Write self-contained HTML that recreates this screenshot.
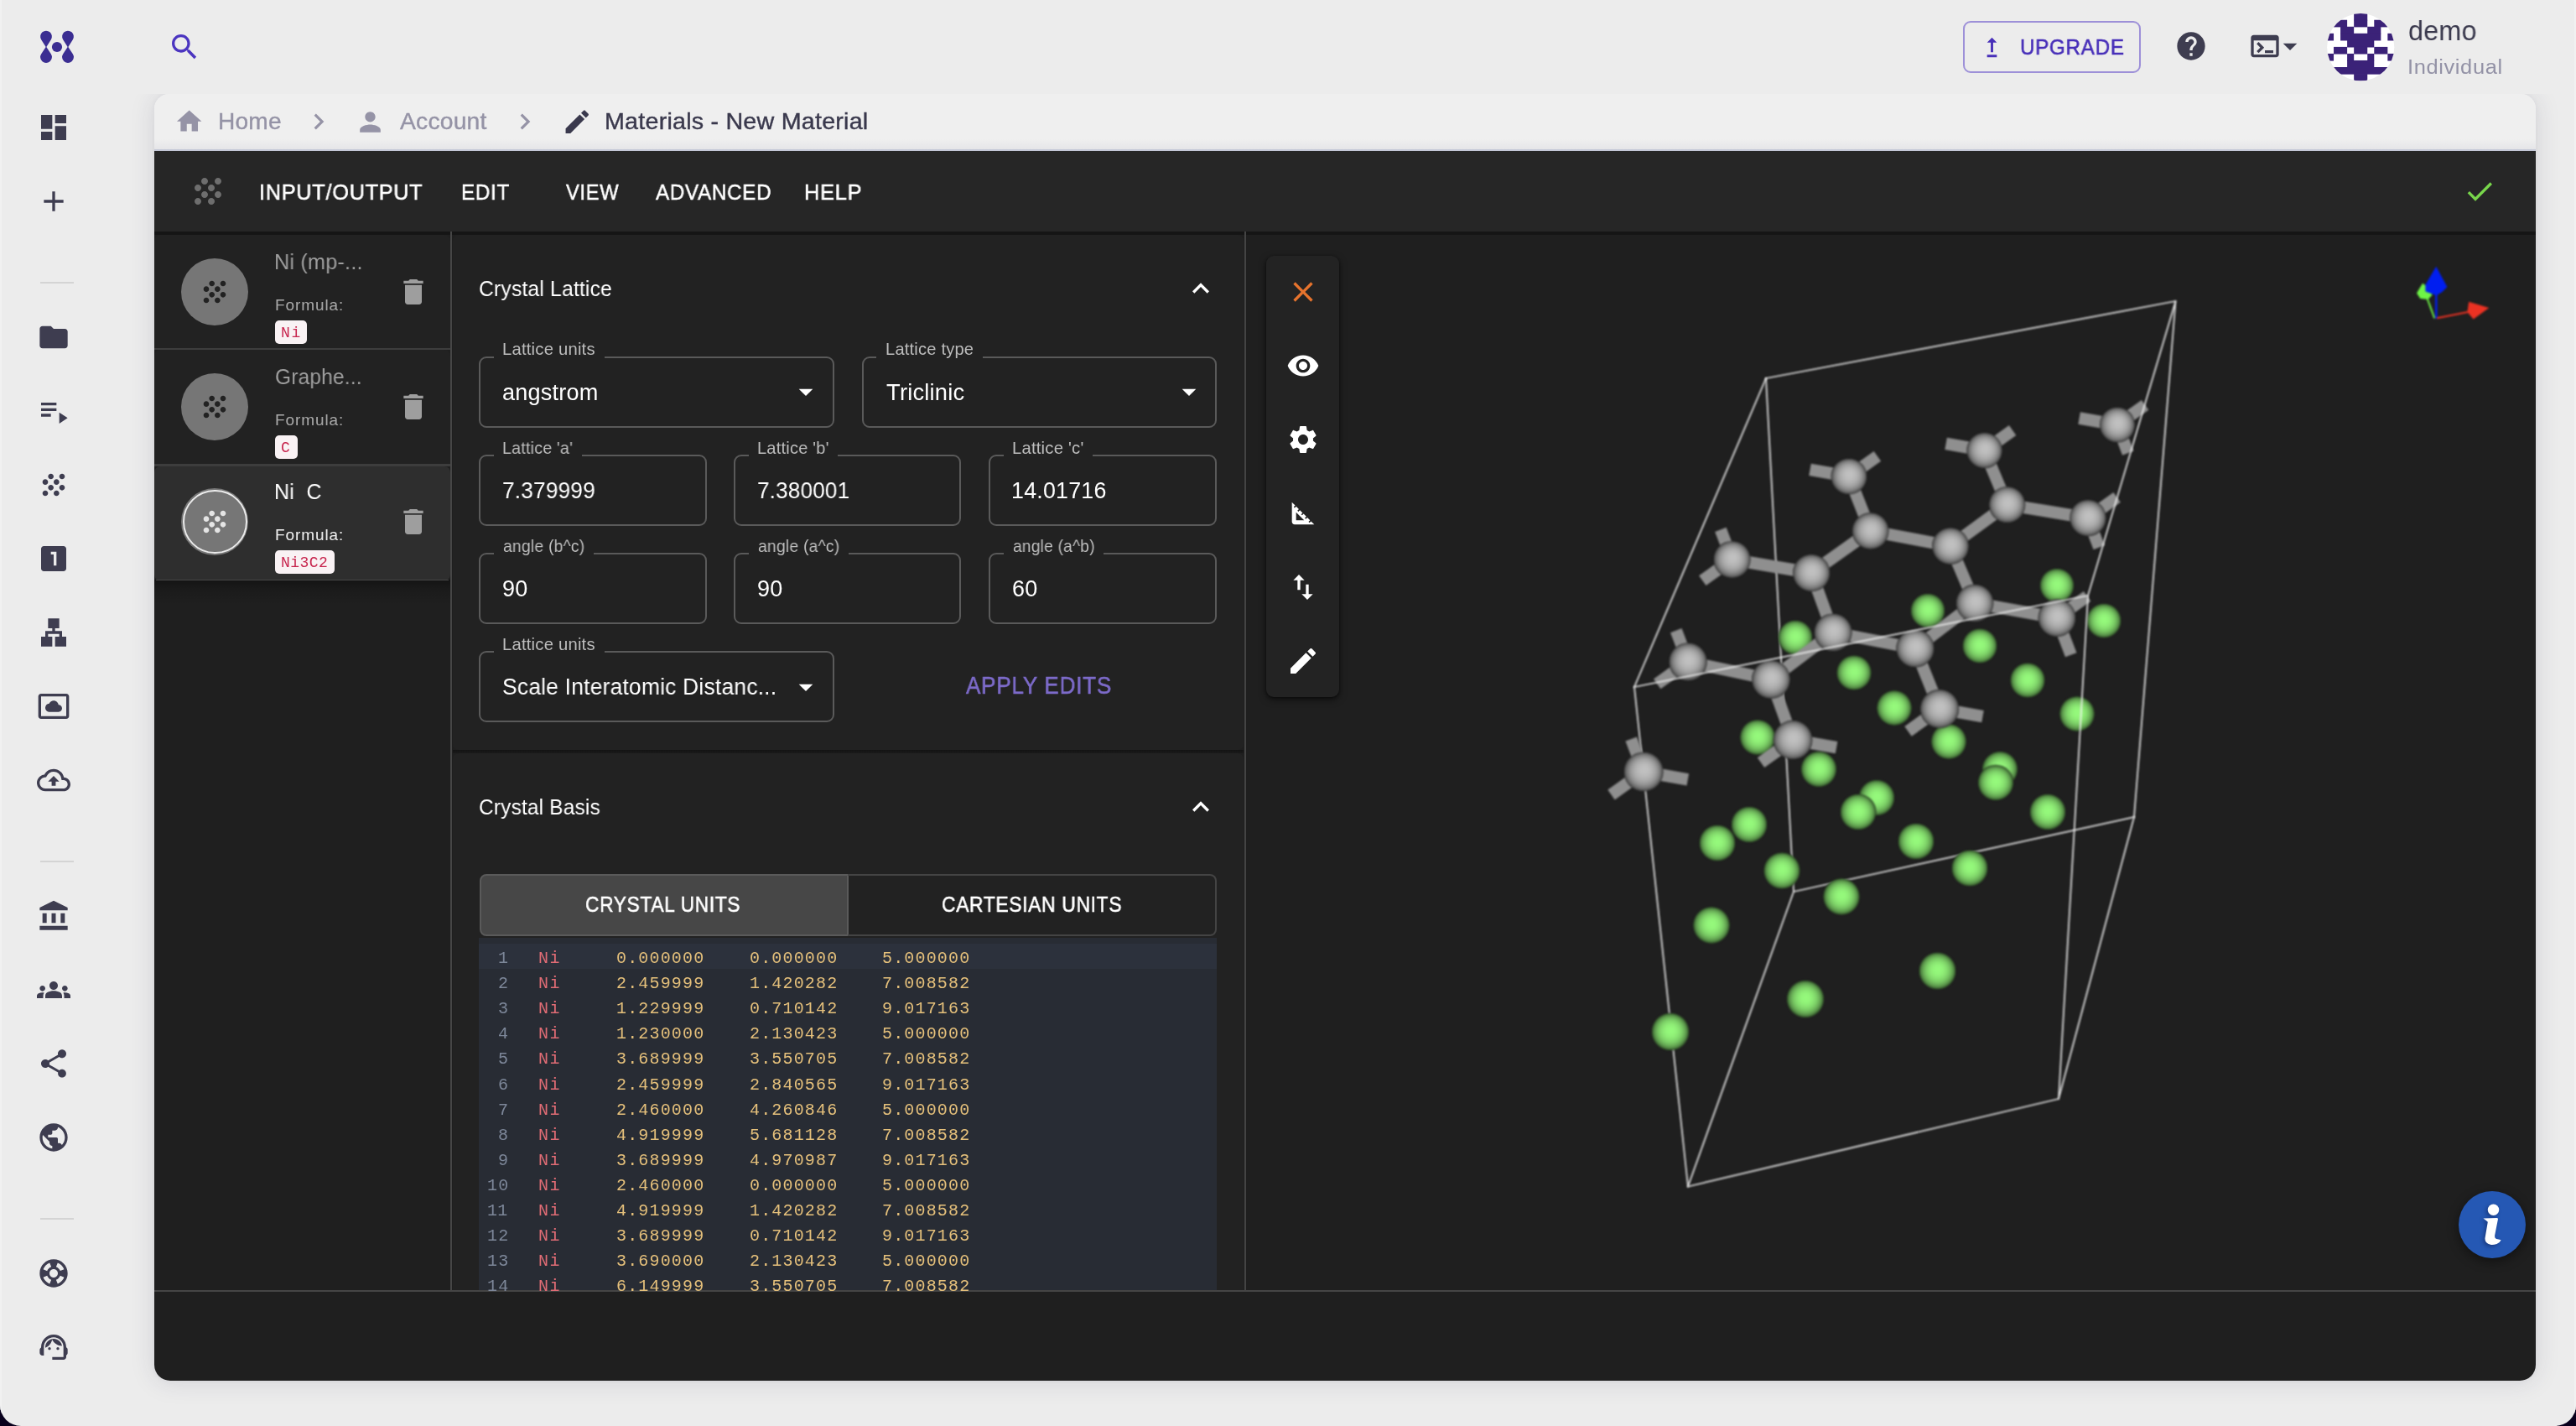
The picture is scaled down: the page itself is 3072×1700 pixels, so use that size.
<!DOCTYPE html>
<html><head><meta charset="utf-8"><title>Materials Designer</title>
<style>
html,body{margin:0;padding:0;}
body{width:3072px;height:1700px;overflow:hidden;background:#08001c;font-family:'Liberation Sans', sans-serif;}
#pg{position:absolute;left:0;top:0;width:3072px;height:1700px;background:#ececec;border-radius:0 0 25px 25px;overflow:hidden;}
.r{position:absolute;box-sizing:border-box;}
.t{position:absolute;white-space:pre;will-change:transform;}
.ic{position:absolute;display:block;}
svg{overflow:visible;}
</style></head><body><div id="pg">
<div class="r" style="left:0px;top:0px;width:2px;height:1700px;background:#f1f1f1;"></div>
<div class="r" style="left:3070px;top:0px;width:2px;height:1700px;background:#f1f1f1;"></div>
<svg class="ic" style="left:0;top:0;width:140px;height:100px" viewBox="0 0 140 100"><g fill="#3b2e92"><path d="M55.00,56.60 L49.15,47.26 A6.9,6.9 0 1,1 60.85,47.26 Z"/><path d="M55.00,55.40 L49.23,64.22 A6.9,6.9 0 1,0 60.77,64.22 Z"/><path d="M81.00,56.60 L75.15,47.26 A6.9,6.9 0 1,1 86.85,47.26 Z"/><path d="M81.00,55.40 L75.23,64.22 A6.9,6.9 0 1,0 86.77,64.22 Z"/><circle cx="68" cy="56" r="6.1"/></g></svg>
<svg class="ic" style="left:44.00px;top:132.00px;width:40px;height:40px" viewBox="0 0 24 24" ><path fill="#3e3d50" d="M3 13h8V3H3v10zm0 8h8v-6H3v6zm10 0h8V11h-8v10zm0-18v6h8V3h-8z"/></svg>
<svg class="ic" style="left:44.00px;top:220.00px;width:40px;height:40px" viewBox="0 0 24 24" ><path fill="#3e3d50" d="M19 13h-6v6h-2v-6H5v-2h6V5h2v6h6v2z"/></svg>
<svg class="ic" style="left:44.00px;top:381.50px;width:40px;height:40px" viewBox="0 0 24 24" ><path fill="#3e3d50" d="M10 4H4c-1.1 0-1.99.9-1.99 2L2 18c0 1.1.9 2 2 2h16c1.1 0 2-.9 2-2V8c0-1.1-.9-2-2-2h-8l-2-2z"/></svg>
<svg class="ic" style="left:44.00px;top:469.50px;width:40px;height:40px" viewBox="0 0 24 24" ><path fill="#3e3d50" d="M3 10h11v2H3zm0-4h11v2H3zm0 8h7v2H3zm13-1v8l6-4z"/></svg>
<svg class="ic" style="left:44.00px;top:557.50px;width:40px;height:40px" viewBox="0 0 24 24" ><path fill="#3e3d50" d="M10 12c-1.1 0-2 .9-2 2s.9 2 2 2 2-.9 2-2-.9-2-2-2zM6 8c-1.1 0-2 .9-2 2s.9 2 2 2 2-.9 2-2-.9-2-2-2zm0 8c-1.1 0-2 .9-2 2s.9 2 2 2 2-.9 2-2-.9-2-2-2zm12-8c1.1 0 2-.9 2-2s-.9-2-2-2-2 .9-2 2 .9 2 2 2zm-4 8c-1.1 0-2 .9-2 2s.9 2 2 2 2-.9 2-2-.9-2-2-2zm4-4c-1.1 0-2 .9-2 2s.9 2 2 2 2-.9 2-2-.9-2-2-2zm-4-4c-1.1 0-2 .9-2 2s.9 2 2 2 2-.9 2-2-.9-2-2-2zm-4-4c-1.1 0-2 .9-2 2s.9 2 2 2 2-.9 2-2-.9-2-2-2z"/></svg>
<svg class="ic" style="left:44.00px;top:645.50px;width:40px;height:40px" viewBox="0 0 24 24" ><path fill="#3e3d50" d="M19 3H5c-1.1 0-2 .9-2 2v14c0 1.1.9 2 2 2h14c1.1 0 2-.9 2-2V5c0-1.1-.9-2-2-2zm-5 14h-2V9h-2V7h4v10z"/></svg>
<svg class="ic" style="left:44.00px;top:733.50px;width:40px;height:40px" viewBox="0 0 24 24" ><path fill="#3e3d50" d="M13 22h8v-7h-3v-4h-5V9h3V2H8v7h3v2H6v4H3v7h8v-7H8v-2h8v2h-3z"/></svg>
<svg class="ic" style="left:44.00px;top:821.50px;width:40px;height:40px" viewBox="0 0 24 24" ><path fill="#3e3d50" d="M9 16h6.5c1.38 0 2.5-1.12 2.5-2.5S16.88 11 15.5 11h-.05c-.24-1.69-1.69-3-3.45-3-1.4 0-2.6.83-3.16 2.02h-.16C7.17 10.18 6 11.45 6 13c0 1.66 1.34 3 3 3zM21 3H3c-1.1 0-2 .9-2 2v14c0 1.1.9 2 2 2h18c1.1 0 2-.9 2-2V5c0-1.1-.9-2-2-2zm0 16.01H3V4.99h18v14.02z"/></svg>
<svg class="ic" style="left:44.00px;top:909.50px;width:40px;height:40px" viewBox="0 0 24 24" ><path fill="#3e3d50" d="M19.35 10.04C18.67 6.59 15.64 4 12 4 9.11 4 6.6 5.64 5.35 8.04 2.34 8.36 0 10.91 0 14c0 3.31 2.69 6 6 6h13c2.76 0 5-2.24 5-5 0-2.64-2.05-4.78-4.65-4.96zM19 18H6c-2.21 0-4-1.79-4-4 0-2.05 1.53-3.76 3.56-3.97l1.07-.11.5-.95C8.08 7.14 9.94 6 12 6c2.62 0 4.88 1.86 5.39 4.43l.3 1.5 1.53.11c1.56.1 2.78 1.41 2.78 2.96 0 1.65-1.35 3-3 3zM8 13h2.55v3h2.9v-3H16l-4-4z"/></svg>
<svg class="ic" style="left:44.00px;top:1071.50px;width:40px;height:40px" viewBox="0 0 24 24" ><path fill="#3e3d50" d="M4 10h3v7H4zm6.5 0h3v7h-3zM2 19h20v3H2zm15-9h3v7h-3zm-5-9L2 6v2h20V6z"/></svg>
<svg class="ic" style="left:44.00px;top:1159.50px;width:40px;height:40px" viewBox="0 0 24 24" ><path fill="#3e3d50" d="M12 12.75c1.63 0 3.07.39 4.24.9 1.08.48 1.76 1.56 1.76 2.73V18H6v-1.61c0-1.18.68-2.26 1.76-2.73 1.17-.52 2.61-.91 4.24-.91zM4 13c1.1 0 2-.9 2-2s-.9-2-2-2-2 .9-2 2 .9 2 2 2zm1.13 1.1c-.37-.06-.74-.1-1.13-.1-.99 0-1.93.21-2.78.58C.48 14.9 0 15.62 0 16.43V18h4.5v-1.61c0-.83.23-1.61.63-2.29zM20 13c1.1 0 2-.9 2-2s-.9-2-2-2-2 .9-2 2 .9 2 2 2zm4 3.43c0-.81-.48-1.53-1.22-1.85-.85-.37-1.79-.58-2.78-.58-.39 0-.76.04-1.13.1.4.68.63 1.46.63 2.29V18H24v-1.57zM12 6c1.66 0 3 1.34 3 3s-1.34 3-3 3-3-1.34-3-3 1.34-3 3-3z"/></svg>
<svg class="ic" style="left:44.00px;top:1247.50px;width:40px;height:40px" viewBox="0 0 24 24" ><path fill="#3e3d50" d="M18 16.08c-.76 0-1.44.3-1.96.77L8.91 12.7c.05-.23.09-.46.09-.7s-.04-.47-.09-.7l7.05-4.11c.54.5 1.25.81 2.04.81 1.66 0 3-1.34 3-3s-1.34-3-3-3-3 1.34-3 3c0 .24.04.47.09.7L8.04 9.81C7.5 9.31 6.79 9 6 9c-1.66 0-3 1.34-3 3s1.34 3 3 3c.79 0 1.5-.31 2.04-.81l7.12 4.16c-.05.21-.08.43-.08.65 0 1.61 1.31 2.92 2.92 2.92 1.61 0 2.92-1.31 2.92-2.92s-1.31-2.92-2.92-2.92z"/></svg>
<svg class="ic" style="left:44.00px;top:1335.50px;width:40px;height:40px" viewBox="0 0 24 24" ><path fill="#3e3d50" d="M12 2C6.48 2 2 6.48 2 12s4.48 10 10 10 10-4.48 10-10S17.52 2 12 2zm-1 17.93c-3.95-.49-7-3.85-7-7.93 0-.62.08-1.21.21-1.79L9 15v1c0 1.1.9 2 2 2v1.93zm6.9-2.54c-.26-.81-1-1.39-1.9-1.39h-1v-3c0-.55-.45-1-1-1H8v-2h2c.55 0 1-.45 1-1V7h2c1.1 0 2-.9 2-2v-.41c2.93 1.19 5 4.06 5 7.41 0 2.08-.8 3.97-2.1 5.39z"/></svg>
<svg class="ic" style="left:44.00px;top:1497.50px;width:40px;height:40px" viewBox="0 0 24 24" ><path fill="#3e3d50" d="M12 2C6.48 2 2 6.48 2 12s4.48 10 10 10 10-4.48 10-10S17.52 2 12 2zm7.46 7.12l-2.78 1.15c-.51-1.36-1.58-2.44-2.95-2.94l1.15-2.78c2.1.8 3.77 2.47 4.58 4.57zM12 15c-1.66 0-3-1.34-3-3s1.34-3 3-3 3 1.34 3 3-1.34 3-3 3zM9.13 4.54l1.17 2.78c-1.38.5-2.47 1.59-2.98 2.97L4.54 9.13c.81-2.11 2.48-3.78 4.59-4.59zM4.54 14.87l2.78-1.15c.51 1.38 1.59 2.46 2.97 2.96l-1.17 2.78c-2.1-.81-3.77-2.48-4.58-4.59zm10.34 4.59l-1.15-2.78c1.37-.51 2.45-1.59 2.95-2.97l2.78 1.17c-.81 2.1-2.48 3.77-4.58 4.58z"/></svg>
<svg class="ic" style="left:44.00px;top:1585.50px;width:40px;height:40px" viewBox="0 0 24 24" ><path fill="#3e3d50" d="M21 12.22C21 6.73 16.74 3 12 3c-4.69 0-9 3.65-9 9.28-.6.34-1 .98-1 1.72v2c0 1.1.9 2 2 2h1v-6.1c0-3.87 3.13-7 7-7s7 3.13 7 7V19h-8v2h8c1.1 0 2-.9 2-2v-1.22c.59-.31 1-.92 1-1.64v-2.3c0-.7-.41-1.31-1-1.62zM9 14c.55 0 1-.45 1-1s-.45-1-1-1-1 .45-1 1 .45 1 1 1zm6 0c.55 0 1-.45 1-1s-.45-1-1-1-1 .45-1 1 .45 1 1 1zM18 11.03C17.52 8.18 15.04 6 12.05 6c-3.03 0-6.29 2.51-6.03 6.45 2.47-1.01 4.33-3.21 4.86-5.89 1.31 2.63 4 4.44 7.12 4.47z"/></svg>
<div class="r" style="left:48px;top:335.5px;width:40px;height:2px;background:#d4d4d4;"></div>
<div class="r" style="left:48px;top:1025.5px;width:40px;height:2px;background:#d4d4d4;"></div>
<div class="r" style="left:48px;top:1451.5px;width:40px;height:2px;background:#d4d4d4;"></div>
<svg class="ic" style="left:200.00px;top:36.20px;width:40px;height:40px" viewBox="0 0 24 24" ><path fill="#4b35c0" d="M15.5 14h-.79l-.28-.27C15.41 12.59 16 11.11 16 9.5 16 5.91 13.09 3 9.5 3S3 5.91 3 9.5 5.91 16 9.5 16c1.61 0 3.09-.59 4.23-1.57l.27.28v.79l5 4.99L20.49 19l-4.99-5zm-6 0C7.01 14 5 11.99 5 9.5S7.01 5 9.5 5 14 7.01 14 9.5 11.99 14 9.5 14z"/></svg>
<div class="r" style="left:2341.4px;top:25.4px;width:211.5px;height:61.4px;background:transparent;border:2px solid #9d90d8;border-radius:9px;"></div>
<svg class="ic" style="left:2357.50px;top:38.75px;width:35px;height:35px" viewBox="0 0 24 24" ><path fill="#4830b9" d="M16 18v2H8v-2h8zM11 7.99V16h2V7.99h3L12 4 8 7.99h3z"/></svg>
<div class="t" style="left:2408.74px;top:42.80px;font:normal normal 26.0px/26.0px 'Liberation Sans', sans-serif;color:#4830b9;letter-spacing:0.740px;-webkit-text-stroke:0.55px #4830b9;transform:scaleX(0.9313086903053047);transform-origin:0 0;">UPGRADE</div>
<svg class="ic" style="left:2593.00px;top:34.90px;width:40px;height:40px" viewBox="0 0 24 24" ><path fill="#3e3d50" d="M12 2C6.48 2 2 6.48 2 12s4.48 10 10 10 10-4.48 10-10S17.52 2 12 2zm1 17h-2v-2h2v2zm2.07-7.75l-.9.92C13.45 12.9 13 13.5 13 15h-2v-.5c0-1.1.45-2.1 1.17-2.83l1.24-1.26c.37-.36.59-.86.59-1.41 0-1.1-.9-2-2-2s-2 .9-2 2H8c0-2.21 1.79-4 4-4s4 1.79 4 4c0 .88-.36 1.68-.93 2.25z"/></svg>
<svg class="ic" style="left:2681.00px;top:34.90px;width:40px;height:40px" viewBox="0 0 24 24" ><path fill="#3e3d50" d="M20 4H4c-1.11 0-2 .9-2 2v12c0 1.1.89 2 2 2h16c1.1 0 2-.9 2-2V6c0-1.1-.89-2-2-2zm0 14H4V8h16v10zm-2-1h-6v-2h6v2zM7.5 17l-1.41-1.41L8.67 13l-2.59-2.59L7.5 9l4 4-4 4z"/></svg>
<svg class="ic" style="left:2711.30px;top:34.60px;width:40px;height:40px" viewBox="0 0 24 24" ><path fill="#3e3d50" d="M7 10l5 5 5-5z"/></svg>
<svg class="ic" style="left:2774.8px;top:15.8px;width:80.4px;height:80.4px" viewBox="0 0 80.4 80.4"><defs><clipPath id="avc"><circle cx="40.2" cy="40.2" r="40.1"/></clipPath></defs><g clip-path="url(#avc)"><rect width="81" height="81" fill="#fff"/><g fill="#3b2278"><rect x="32.16" y="-0.30" width="16.08" height="8.64"/><rect x="8.04" y="7.74" width="16.08" height="8.64"/><rect x="32.16" y="7.74" width="16.08" height="8.64"/><rect x="56.28" y="7.74" width="16.08" height="8.64"/><rect x="16.08" y="15.78" width="16.08" height="8.64"/><rect x="48.24" y="15.78" width="16.08" height="8.64"/><rect x="0.00" y="23.82" width="8.04" height="8.64"/><rect x="16.08" y="23.82" width="48.24" height="8.64"/><rect x="72.36" y="23.82" width="8.04" height="8.64"/><rect x="24.12" y="31.86" width="32.16" height="8.64"/><rect x="8.04" y="39.90" width="16.08" height="8.64"/><rect x="32.16" y="39.90" width="16.08" height="8.64"/><rect x="56.28" y="39.90" width="16.08" height="8.64"/><rect x="0.00" y="47.94" width="8.04" height="8.64"/><rect x="24.12" y="47.94" width="8.04" height="8.64"/><rect x="48.24" y="47.94" width="8.04" height="8.64"/><rect x="72.36" y="47.94" width="8.04" height="8.64"/><rect x="24.12" y="55.98" width="32.16" height="8.64"/><rect x="8.04" y="64.02" width="64.32" height="8.64"/><rect x="32.16" y="72.06" width="16.08" height="8.64"/></g></g></svg>
<div class="t" style="left:2871.72px;top:20.62px;font:normal normal 32.96px/32.96px 'Liberation Sans', sans-serif;color:#3a394d;letter-spacing:0.200px;transform:scaleX(0.9813622794031704);transform-origin:0 0;">demo</div>
<div class="t" style="left:2870.64px;top:67.74px;font:normal normal 24.72px/24.72px 'Liberation Sans', sans-serif;color:#9392a6;letter-spacing:0.600px;transform:scaleX(1.0296441779225745);transform-origin:0 0;">Individual</div>
<div class="r" style="left:100px;top:112px;width:2972px;height:1588px;overflow:hidden"><div class="r" style="left:84px;top:0;width:2839.8px;height:1534px;background:linear-gradient(to bottom,#efefef 0,#efefef 60px,#1f1f1f 60px);border-radius:18px 18px 19px 19px;box-shadow:0 1px 30px rgba(40,40,80,.13),0 0 6px rgba(40,40,80,.04);"></div></div>
<div class="r" style="left:184px;top:112px;width:2839.8px;height:68px;background:#efefef;border-radius:18px 18px 0 0;"></div>
<div class="r" style="left:184px;top:166px;width:2839.8px;height:12px;background:linear-gradient(to bottom,rgba(230,230,233,0) 0%,rgba(229,229,232,1) 100%);"></div>
<div class="r" style="left:184px;top:178px;width:2839.8px;height:2px;background:#c3c7d6;"></div>
<svg class="ic" style="left:208.20px;top:127.30px;width:35.4px;height:35.4px" viewBox="0 0 24 24" ><path fill="#9593a6" d="M10 20v-6h4v6h5v-8h3L12 3 2 12h3v8z"/></svg>
<div class="t" style="left:259.79px;top:131.20px;font:normal normal 28.0px/28.0px 'Liberation Sans', sans-serif;color:#9593a6;letter-spacing:0.200px;-webkit-text-stroke:0.4px #9593a6;transform:scaleX(1.0038892111992093);transform-origin:0 0;">Home</div>
<svg class="ic" style="left:360.92px;top:126.00px;width:38px;height:38px" viewBox="0 0 24 24" ><path fill="#9593a6" d="M10 6L8.59 7.41 13.17 12l-4.58 4.59L10 18l6-6z"/></svg>
<svg class="ic" style="left:423.40px;top:126.50px;width:37px;height:37px" viewBox="0 0 24 24" ><path fill="#9593a6" d="M12 12c2.21 0 4-1.79 4-4s-1.79-4-4-4-4 1.79-4 4 1.79 4 4 4zm0 2c-2.67 0-8 1.34-8 4v2h16v-2c0-2.66-5.33-4-8-4z"/></svg>
<div class="t" style="left:476.60px;top:131.20px;font:normal normal 28.0px/28.0px 'Liberation Sans', sans-serif;color:#9593a6;letter-spacing:0.200px;-webkit-text-stroke:0.4px #9593a6;transform:scaleX(1.0098196369894568);transform-origin:0 0;">Account</div>
<svg class="ic" style="left:607.02px;top:126.00px;width:38px;height:38px" viewBox="0 0 24 24" ><path fill="#9593a6" d="M10 6L8.59 7.41 13.17 12l-4.58 4.59L10 18l6-6z"/></svg>
<svg class="ic" style="left:669.50px;top:126.80px;width:36.5px;height:36.5px" viewBox="0 0 24 24" ><path fill="#3a394d" d="M3 17.25V21h3.75L17.81 9.94l-3.75-3.75L3 17.25zM20.71 7.04c.39-.39.39-1.02 0-1.41l-2.34-2.34c-.39-.39-1.02-.39-1.41 0l-1.83 1.83 3.75 3.75 1.83-1.83z"/></svg>
<div class="t" style="left:720.75px;top:131.20px;font:normal normal 28.0px/28.0px 'Liberation Sans', sans-serif;color:#3a394d;letter-spacing:0.200px;-webkit-text-stroke:0.4px #3a394d;transform:scaleX(1.0253046333642934);transform-origin:0 0;">Materials - New Material</div>
<div class="r" style="left:184px;top:180px;width:2839.8px;height:96px;background:#262626;"></div>
<div class="r" style="left:184px;top:276px;width:2839.8px;height:4px;background:#151515;"></div>
<svg class="ic" style="left:224.20px;top:203.90px;width:48px;height:48px" viewBox="0 0 24 24" ><path fill="#6e6e6e" d="M10 12c-1.1 0-2 .9-2 2s.9 2 2 2 2-.9 2-2-.9-2-2-2zM6 8c-1.1 0-2 .9-2 2s.9 2 2 2 2-.9 2-2-.9-2-2-2zm0 8c-1.1 0-2 .9-2 2s.9 2 2 2 2-.9 2-2-.9-2-2-2zm12-8c1.1 0 2-.9 2-2s-.9-2-2-2-2 .9-2 2 .9 2 2 2zm-4 8c-1.1 0-2 .9-2 2s.9 2 2 2 2-.9 2-2-.9-2-2-2zm4-4c-1.1 0-2 .9-2 2s.9 2 2 2 2-.9 2-2-.9-2-2-2zm-4-4c-1.1 0-2 .9-2 2s.9 2 2 2 2-.9 2-2-.9-2-2-2zm-4-4c-1.1 0-2 .9-2 2s.9 2 2 2 2-.9 2-2-.9-2-2-2z"/></svg>
<div class="t" style="left:309.16px;top:215.90px;font:normal normal 26.0px/26.0px 'Liberation Sans', sans-serif;color:#fff;letter-spacing:0.740px;-webkit-text-stroke:0.5px #fff;transform:scaleX(0.9724564793705689);transform-origin:0 0;">INPUT/OUTPUT</div>
<div class="t" style="left:549.63px;top:215.90px;font:normal normal 26.0px/26.0px 'Liberation Sans', sans-serif;color:#fff;letter-spacing:0.740px;-webkit-text-stroke:0.5px #fff;transform:scaleX(0.9334842620125369);transform-origin:0 0;">EDIT</div>
<div class="t" style="left:675.20px;top:215.90px;font:normal normal 26.0px/26.0px 'Liberation Sans', sans-serif;color:#fff;letter-spacing:0.740px;-webkit-text-stroke:0.5px #fff;transform:scaleX(0.9099164414346961);transform-origin:0 0;">VIEW</div>
<div class="t" style="left:781.80px;top:215.90px;font:normal normal 26.0px/26.0px 'Liberation Sans', sans-serif;color:#fff;letter-spacing:0.740px;-webkit-text-stroke:0.5px #fff;transform:scaleX(0.9316309363015317);transform-origin:0 0;">ADVANCED</div>
<div class="t" style="left:959.04px;top:215.90px;font:normal normal 26.0px/26.0px 'Liberation Sans', sans-serif;color:#fff;letter-spacing:0.740px;-webkit-text-stroke:0.5px #fff;transform:scaleX(0.9775723495232838);transform-origin:0 0;">HELP</div>
<svg class="ic" style="left:2936.50px;top:208.10px;width:40px;height:40px" viewBox="0 0 24 24" ><path fill="#78d64b" d="M9 16.17L4.83 12l-1.42 1.41L9 19 21 7l-1.41-1.41z"/></svg>
<div class="r" style="left:184px;top:280px;width:352.6px;height:135px;background:#222;border-radius:7px 7px 0 0;"></div>
<div class="r" style="left:184px;top:415px;width:353px;height:2px;background:#3d3d3d;"></div>
<div class="r" style="left:184px;top:417px;width:352.6px;height:136px;background:#222;border-radius:7px 7px 0 0;"></div>
<div class="r" style="left:184px;top:553px;width:353px;height:2.5px;background:#3d3d3d;"></div>
<div class="r" style="left:184px;top:691px;width:353px;height:30px;background:linear-gradient(to bottom,rgba(0,0,0,.36),rgba(0,0,0,.12) 45%,rgba(0,0,0,0));"></div>
<div class="r" style="left:184px;top:555.5px;width:352.6px;height:136px;background:#2e2e2e;border-radius:7px;"></div>
<div class="r" style="left:186px;top:690.6px;width:349px;height:1.8px;background:#474747;"></div>
<div class="r" style="left:216.1px;top:307.79999999999995px;width:80.2px;height:80.2px;background:#767676;border-radius:50%;"></div>
<svg class="ic" style="left:236.10px;top:327.90px;width:40px;height:40px" viewBox="0 0 24 24" ><path fill="#222" d="M10 12c-1.1 0-2 .9-2 2s.9 2 2 2 2-.9 2-2-.9-2-2-2zM6 8c-1.1 0-2 .9-2 2s.9 2 2 2 2-.9 2-2-.9-2-2-2zm0 8c-1.1 0-2 .9-2 2s.9 2 2 2 2-.9 2-2-.9-2-2-2zm12-8c1.1 0 2-.9 2-2s-.9-2-2-2-2 .9-2 2 .9 2 2 2zm-4 8c-1.1 0-2 .9-2 2s.9 2 2 2 2-.9 2-2-.9-2-2-2zm4-4c-1.1 0-2 .9-2 2s.9 2 2 2 2-.9 2-2-.9-2-2-2zm-4-4c-1.1 0-2 .9-2 2s.9 2 2 2 2-.9 2-2-.9-2-2-2zm-4-4c-1.1 0-2 .9-2 2s.9 2 2 2 2-.9 2-2-.9-2-2-2z"/></svg>
<div class="t" style="left:327.14px;top:299.92px;font:normal normal 25.75px/25.75px 'Liberation Sans', sans-serif;color:#9e9e9e;letter-spacing:0.200px;transform:scaleX(0.9797106071249468);transform-origin:0 0;">Ni (mp-...</div>
<div class="t" style="left:328.10px;top:353.77px;font:normal normal 19.05px/19.05px 'Liberation Sans', sans-serif;color:#ababab;letter-spacing:0.900px;transform:scaleX(0.998776970153928);transform-origin:0 0;">Formula:</div>
<div class="r" style="left:328px;top:382.2px;width:38.1px;height:27.8px;background:#f9f2f4;border-radius:5px;"></div>
<div class="t" style="left:334.70px;top:387.80px;font:normal normal 18px/18px 'Liberation Mono', monospace;color:#c7254e;letter-spacing:1.798px;">Ni</div>
<svg class="ic" style="left:473.20px;top:327.90px;width:40px;height:40px" viewBox="0 0 24 24" ><path fill="#9e9e9e" d="M6 19c0 1.1.9 2 2 2h8c1.1 0 2-.9 2-2V7H6v12zM19 4h-3.5l-1-1h-5l-1 1H5v2h14V4z"/></svg>
<div class="r" style="left:216.1px;top:444.79999999999995px;width:80.2px;height:80.2px;background:#767676;border-radius:50%;"></div>
<svg class="ic" style="left:236.10px;top:464.90px;width:40px;height:40px" viewBox="0 0 24 24" ><path fill="#222" d="M10 12c-1.1 0-2 .9-2 2s.9 2 2 2 2-.9 2-2-.9-2-2-2zM6 8c-1.1 0-2 .9-2 2s.9 2 2 2 2-.9 2-2-.9-2-2-2zm0 8c-1.1 0-2 .9-2 2s.9 2 2 2 2-.9 2-2-.9-2-2-2zm12-8c1.1 0 2-.9 2-2s-.9-2-2-2-2 .9-2 2 .9 2 2 2zm-4 8c-1.1 0-2 .9-2 2s.9 2 2 2 2-.9 2-2-.9-2-2-2zm4-4c-1.1 0-2 .9-2 2s.9 2 2 2 2-.9 2-2-.9-2-2-2zm-4-4c-1.1 0-2 .9-2 2s.9 2 2 2 2-.9 2-2-.9-2-2-2zm-4-4c-1.1 0-2 .9-2 2s.9 2 2 2 2-.9 2-2-.9-2-2-2z"/></svg>
<div class="t" style="left:328.15px;top:436.92px;font:normal normal 25.75px/25.75px 'Liberation Sans', sans-serif;color:#9e9e9e;letter-spacing:0.200px;transform:scaleX(0.9508851110591633);transform-origin:0 0;">Graphe...</div>
<div class="t" style="left:328.10px;top:490.77px;font:normal normal 19.05px/19.05px 'Liberation Sans', sans-serif;color:#ababab;letter-spacing:0.900px;transform:scaleX(0.998776970153928);transform-origin:0 0;">Formula:</div>
<div class="r" style="left:328px;top:519.1999999999999px;width:27px;height:27.8px;background:#f9f2f4;border-radius:5px;"></div>
<div class="t" style="left:334.70px;top:524.80px;font:normal normal 18px/18px 'Liberation Mono', monospace;color:#c7254e;">C</div>
<svg class="ic" style="left:473.20px;top:464.90px;width:40px;height:40px" viewBox="0 0 24 24" ><path fill="#9e9e9e" d="M6 19c0 1.1.9 2 2 2h8c1.1 0 2-.9 2-2V7H6v12zM19 4h-3.5l-1-1h-5l-1 1H5v2h14V4z"/></svg>
<div class="r" style="left:216.1px;top:581.8px;width:80.2px;height:80.2px;background:#767676;border-radius:50%;"></div>
<div class="r" style="left:217.79999999999998px;top:583.5px;width:76.8px;height:76.8px;background:transparent;border-radius:50%;border:2.2px solid #ebebeb;"></div>
<svg class="ic" style="left:236.10px;top:601.90px;width:40px;height:40px" viewBox="0 0 24 24" ><path fill="#e4e4e4" d="M10 12c-1.1 0-2 .9-2 2s.9 2 2 2 2-.9 2-2-.9-2-2-2zM6 8c-1.1 0-2 .9-2 2s.9 2 2 2 2-.9 2-2-.9-2-2-2zm0 8c-1.1 0-2 .9-2 2s.9 2 2 2 2-.9 2-2-.9-2-2-2zm12-8c1.1 0 2-.9 2-2s-.9-2-2-2-2 .9-2 2 .9 2 2 2zm-4 8c-1.1 0-2 .9-2 2s.9 2 2 2 2-.9 2-2-.9-2-2-2zm4-4c-1.1 0-2 .9-2 2s.9 2 2 2 2-.9 2-2-.9-2-2-2zm-4-4c-1.1 0-2 .9-2 2s.9 2 2 2 2-.9 2-2-.9-2-2-2zm-4-4c-1.1 0-2 .9-2 2s.9 2 2 2 2-.9 2-2-.9-2-2-2z"/></svg>
<div class="t" style="left:327.16px;top:573.92px;font:normal normal 25.75px/25.75px 'Liberation Sans', sans-serif;color:#fff;letter-spacing:0.200px;transform:scaleX(0.9724853405502932);transform-origin:0 0;">Ni  C</div>
<div class="t" style="left:328.10px;top:627.77px;font:normal normal 19.05px/19.05px 'Liberation Sans', sans-serif;color:#f2f2f2;letter-spacing:0.900px;transform:scaleX(0.998776970153928);transform-origin:0 0;">Formula:</div>
<div class="r" style="left:328px;top:656.1999999999999px;width:71px;height:27.8px;background:#f9f2f4;border-radius:5px;"></div>
<div class="t" style="left:334.70px;top:661.80px;font:normal normal 18px/18px 'Liberation Mono', monospace;color:#c7254e;letter-spacing:0.448px;">Ni3C2</div>
<svg class="ic" style="left:473.20px;top:601.90px;width:40px;height:40px" viewBox="0 0 24 24" ><path fill="#9e9e9e" d="M6 19c0 1.1.9 2 2 2h8c1.1 0 2-.9 2-2V7H6v12zM19 4h-3.5l-1-1h-5l-1 1H5v2h14V4z"/></svg>
<div class="r" style="left:537px;top:276px;width:2.2px;height:1262px;background:#464646;"></div>
<div class="r" style="left:539.7px;top:280px;width:943.7px;height:614px;background:#222;border-radius:7px;"></div>
<div class="r" style="left:539.7px;top:894px;width:943.7px;height:4px;background:linear-gradient(to bottom,#141414,#1a1a1a);"></div>
<div class="r" style="left:539.7px;top:898px;width:943.7px;height:640px;background:#222;border-radius:7px 7px 0 0;"></div>
<div class="r" style="left:1484px;top:276px;width:2.3px;height:1262px;background:#444;"></div>
<div class="r" style="left:184px;top:1538px;width:2839.8px;height:2px;background:#454545;"></div>
<div class="t" style="left:570.94px;top:332.32px;font:normal normal 25.75px/25.75px 'Liberation Sans', sans-serif;color:#fff;letter-spacing:0.200px;transform:scaleX(0.9573743961624913);transform-origin:0 0;">Crystal Lattice</div>
<svg class="ic" style="left:1412.00px;top:324.00px;width:40px;height:40px" viewBox="0 0 24 24" ><path fill="#fff" d="M12 8l-6 6 1.41 1.41L12 10.83l4.59 4.58L18 14z"/></svg>
<div class="t" style="left:570.95px;top:949.83px;font:normal normal 25.75px/25.75px 'Liberation Sans', sans-serif;color:#fff;letter-spacing:0.200px;transform:scaleX(0.9485106568344965);transform-origin:0 0;">Crystal Basis</div>
<svg class="ic" style="left:1411.50px;top:942.00px;width:40px;height:40px" viewBox="0 0 24 24" ><path fill="#fff" d="M12 8l-6 6 1.41 1.41L12 10.83l4.59 4.58L18 14z"/></svg>
<div class="r" style="left:571.2px;top:424.7px;width:423.4px;height:85.0px;background:transparent;border:2px solid #5a5a5a;border-radius:9px;"></div>
<div class="r" style="left:588.6px;top:422.7px;width:132.39999999999998px;height:6px;background:#222;"></div>
<div class="t" style="left:598.89px;top:406.45px;font:normal normal 20.09px/20.09px 'Liberation Sans', sans-serif;color:#bdbdbd;letter-spacing:0.200px;transform:scaleX(1.0091566421205538);transform-origin:0 0;">Lattice units</div>
<div class="t" style="left:598.89px;top:454.51px;font:normal normal 26.78px/26.78px 'Liberation Sans', sans-serif;color:#fff;letter-spacing:0.200px;transform:scaleX(1.0119681393009154);transform-origin:0 0;">angstrom</div>
<svg class="ic" style="left:941.10px;top:447.20px;width:40px;height:40px" viewBox="0 0 24 24" ><path fill="#fff" d="M7 10l5 5 5-5z"/></svg>
<div class="r" style="left:1027.8px;top:424.7px;width:423.4000000000001px;height:85.0px;background:transparent;border:2px solid #5a5a5a;border-radius:9px;"></div>
<div class="r" style="left:1045.2px;top:422.7px;width:126.69999999999982px;height:6px;background:#222;"></div>
<div class="t" style="left:1055.50px;top:406.45px;font:normal normal 20.09px/20.09px 'Liberation Sans', sans-serif;color:#bdbdbd;letter-spacing:0.200px;transform:scaleX(1.0007879032575553);transform-origin:0 0;">Lattice type</div>
<div class="t" style="left:1056.50px;top:454.51px;font:normal normal 26.78px/26.78px 'Liberation Sans', sans-serif;color:#fff;letter-spacing:0.200px;transform:scaleX(1.0206397525818152);transform-origin:0 0;">Triclinic</div>
<svg class="ic" style="left:1397.70px;top:447.20px;width:40px;height:40px" viewBox="0 0 24 24" ><path fill="#fff" d="M7 10l5 5 5-5z"/></svg>
<div class="r" style="left:571.2px;top:541.9px;width:271.4px;height:85.0px;background:transparent;border:2px solid #5a5a5a;border-radius:9px;"></div>
<div class="r" style="left:588.6px;top:539.9px;width:105.0px;height:6px;background:#222;"></div>
<div class="t" style="left:598.92px;top:523.65px;font:normal normal 20.09px/20.09px 'Liberation Sans', sans-serif;color:#bdbdbd;letter-spacing:0.200px;transform:scaleX(0.9804841131853427);transform-origin:0 0;">Lattice 'a'</div>
<div class="t" style="left:598.92px;top:571.71px;font:normal normal 26.78px/26.78px 'Liberation Sans', sans-serif;color:#fff;letter-spacing:0.200px;transform:scaleX(0.9788486653806109);transform-origin:0 0;">7.379999</div>
<div class="r" style="left:875.3px;top:541.9px;width:271.10000000000014px;height:85.0px;background:transparent;border:2px solid #5a5a5a;border-radius:9px;"></div>
<div class="r" style="left:892.6999999999999px;top:539.9px;width:106.5px;height:6px;background:#222;"></div>
<div class="t" style="left:903.00px;top:523.65px;font:normal normal 20.09px/20.09px 'Liberation Sans', sans-serif;color:#bdbdbd;letter-spacing:0.200px;transform:scaleX(0.9983979520376937);transform-origin:0 0;">Lattice 'b'</div>
<div class="t" style="left:903.03px;top:571.71px;font:normal normal 26.78px/26.78px 'Liberation Sans', sans-serif;color:#fff;letter-spacing:0.200px;transform:scaleX(0.9734506028877031);transform-origin:0 0;">7.380001</div>
<div class="r" style="left:1179.3px;top:541.9px;width:271.9000000000001px;height:85.0px;background:transparent;border:2px solid #5a5a5a;border-radius:9px;"></div>
<div class="r" style="left:1196.7px;top:539.9px;width:106.29999999999995px;height:6px;background:#222;"></div>
<div class="t" style="left:1206.99px;top:523.65px;font:normal normal 20.09px/20.09px 'Liberation Sans', sans-serif;color:#bdbdbd;letter-spacing:0.200px;transform:scaleX(1.0096032796714567);transform-origin:0 0;">Lattice 'c'</div>
<div class="t" style="left:1205.99px;top:571.71px;font:normal normal 26.78px/26.78px 'Liberation Sans', sans-serif;color:#fff;letter-spacing:0.200px;transform:scaleX(1.0031684524391498);transform-origin:0 0;">14.01716</div>
<div class="r" style="left:571.2px;top:659.1px;width:271.4px;height:85.0px;background:transparent;border:2px solid #5a5a5a;border-radius:9px;"></div>
<div class="r" style="left:588.6px;top:657.1px;width:119.39999999999998px;height:6px;background:#222;"></div>
<div class="t" style="left:599.90px;top:640.86px;font:normal normal 20.09px/20.09px 'Liberation Sans', sans-serif;color:#bdbdbd;letter-spacing:0.200px;transform:scaleX(0.9648237771512985);transform-origin:0 0;">angle (b^c)</div>
<div class="t" style="left:598.89px;top:688.91px;font:normal normal 26.78px/26.78px 'Liberation Sans', sans-serif;color:#fff;letter-spacing:0.200px;transform:scaleX(1.007627609080634);transform-origin:0 0;">90</div>
<div class="r" style="left:875.3px;top:659.1px;width:271.10000000000014px;height:85.0px;background:transparent;border:2px solid #5a5a5a;border-radius:9px;"></div>
<div class="r" style="left:892.6999999999999px;top:657.1px;width:119.39999999999998px;height:6px;background:#222;"></div>
<div class="t" style="left:904.00px;top:640.86px;font:normal normal 20.09px/20.09px 'Liberation Sans', sans-serif;color:#bdbdbd;letter-spacing:0.200px;transform:scaleX(0.9648237771512985);transform-origin:0 0;">angle (a^c)</div>
<div class="t" style="left:902.99px;top:688.91px;font:normal normal 26.78px/26.78px 'Liberation Sans', sans-serif;color:#fff;letter-spacing:0.200px;transform:scaleX(1.007627609080634);transform-origin:0 0;">90</div>
<div class="r" style="left:1179.3px;top:659.1px;width:271.9000000000001px;height:85.0px;background:transparent;border:2px solid #5a5a5a;border-radius:9px;"></div>
<div class="r" style="left:1196.7px;top:657.1px;width:119.69999999999982px;height:6px;background:#222;"></div>
<div class="t" style="left:1208.00px;top:640.86px;font:normal normal 20.09px/20.09px 'Liberation Sans', sans-serif;color:#bdbdbd;letter-spacing:0.200px;transform:scaleX(0.9570351887289862);transform-origin:0 0;">angle (a^b)</div>
<div class="t" style="left:1206.99px;top:688.91px;font:normal normal 26.78px/26.78px 'Liberation Sans', sans-serif;color:#fff;letter-spacing:0.200px;transform:scaleX(1.007627609080634);transform-origin:0 0;">60</div>
<div class="r" style="left:571.2px;top:776.3px;width:423.4px;height:85.0px;background:transparent;border:2px solid #5a5a5a;border-radius:9px;"></div>
<div class="r" style="left:588.6px;top:774.3px;width:132.39999999999998px;height:6px;background:#222;"></div>
<div class="t" style="left:598.89px;top:758.05px;font:normal normal 20.09px/20.09px 'Liberation Sans', sans-serif;color:#bdbdbd;letter-spacing:0.200px;transform:scaleX(1.0091566421205538);transform-origin:0 0;">Lattice units</div>
<div class="t" style="left:598.91px;top:806.11px;font:normal normal 26.78px/26.78px 'Liberation Sans', sans-serif;color:#fff;letter-spacing:0.200px;transform:scaleX(0.9876774890726031);transform-origin:0 0;">Scale Interatomic Distanc...</div>
<svg class="ic" style="left:941.10px;top:798.80px;width:40px;height:40px" viewBox="0 0 24 24" ><path fill="#fff" d="M7 10l5 5 5-5z"/></svg>
<div class="t" style="left:1151.90px;top:802.15px;font:normal normal 29.5px/29.5px 'Liberation Sans', sans-serif;color:#7d6bca;letter-spacing:0.920px;-webkit-text-stroke:0.55px #7d6bca;transform:scaleX(0.8808523357909622);transform-origin:0 0;">APPLY EDITS</div>
<div class="r" style="left:571.5px;top:1042px;width:440.5px;height:74px;background:#474747;border:2px solid #5a5a5a;border-radius:8px 0 0 8px;"></div>
<div class="r" style="left:1011.3px;top:1042px;width:440px;height:74px;background:transparent;border:2px solid #444;border-left:none;border-radius:0 8px 8px 0;"></div>
<div class="t" style="left:698.41px;top:1066.46px;font:normal normal 25.48px/25.48px 'Liberation Sans', sans-serif;color:#fff;letter-spacing:0.740px;-webkit-text-stroke:0.55px #fff;transform:scaleX(0.8934609297845829);transform-origin:0 0;">CRYSTAL UNITS</div>
<div class="t" style="left:1123.30px;top:1066.46px;font:normal normal 25.48px/25.48px 'Liberation Sans', sans-serif;color:#fff;letter-spacing:0.740px;-webkit-text-stroke:0.55px #fff;transform:scaleX(0.8968786192647937);transform-origin:0 0;">CARTESIAN UNITS</div>
<div class="r" style="left:571.2px;top:1118.2px;width:880.2px;height:419.8px;background:#282c34;overflow:hidden">
<div class="r" style="left:0;top:7.2px;width:880px;height:30px;background:#2c313c"></div>
</div>
<div class="t" style="left:594.36px;top:1132.90px;font:normal normal 20px/20px 'Liberation Mono', monospace;color:#7d8799;">1</div>
<div class="t" style="left:641.70px;top:1132.90px;font:normal normal 20px/20px 'Liberation Mono', monospace;color:#e06c75;letter-spacing:1.488px;">Ni</div>
<div class="t" style="left:735.00px;top:1132.90px;font:normal normal 20px/20px 'Liberation Mono', monospace;color:#e5c07b;letter-spacing:1.169px;">0.000000</div>
<div class="t" style="left:893.80px;top:1132.90px;font:normal normal 20px/20px 'Liberation Mono', monospace;color:#e5c07b;letter-spacing:1.169px;">0.000000</div>
<div class="t" style="left:1052.10px;top:1132.90px;font:normal normal 20px/20px 'Liberation Mono', monospace;color:#e5c07b;letter-spacing:1.169px;">5.000000</div>
<div class="t" style="left:594.36px;top:1163.02px;font:normal normal 20px/20px 'Liberation Mono', monospace;color:#7d8799;">2</div>
<div class="t" style="left:641.70px;top:1163.02px;font:normal normal 20px/20px 'Liberation Mono', monospace;color:#e06c75;letter-spacing:1.488px;">Ni</div>
<div class="t" style="left:735.00px;top:1163.02px;font:normal normal 20px/20px 'Liberation Mono', monospace;color:#e5c07b;letter-spacing:1.169px;">2.459999</div>
<div class="t" style="left:893.80px;top:1163.02px;font:normal normal 20px/20px 'Liberation Mono', monospace;color:#e5c07b;letter-spacing:1.169px;">1.420282</div>
<div class="t" style="left:1052.10px;top:1163.02px;font:normal normal 20px/20px 'Liberation Mono', monospace;color:#e5c07b;letter-spacing:1.169px;">7.008582</div>
<div class="t" style="left:594.36px;top:1193.14px;font:normal normal 20px/20px 'Liberation Mono', monospace;color:#7d8799;">3</div>
<div class="t" style="left:641.70px;top:1193.14px;font:normal normal 20px/20px 'Liberation Mono', monospace;color:#e06c75;letter-spacing:1.488px;">Ni</div>
<div class="t" style="left:735.00px;top:1193.14px;font:normal normal 20px/20px 'Liberation Mono', monospace;color:#e5c07b;letter-spacing:1.169px;">1.229999</div>
<div class="t" style="left:893.80px;top:1193.14px;font:normal normal 20px/20px 'Liberation Mono', monospace;color:#e5c07b;letter-spacing:1.169px;">0.710142</div>
<div class="t" style="left:1052.10px;top:1193.14px;font:normal normal 20px/20px 'Liberation Mono', monospace;color:#e5c07b;letter-spacing:1.169px;">9.017163</div>
<div class="t" style="left:594.36px;top:1223.26px;font:normal normal 20px/20px 'Liberation Mono', monospace;color:#7d8799;">4</div>
<div class="t" style="left:641.70px;top:1223.26px;font:normal normal 20px/20px 'Liberation Mono', monospace;color:#e06c75;letter-spacing:1.488px;">Ni</div>
<div class="t" style="left:735.00px;top:1223.26px;font:normal normal 20px/20px 'Liberation Mono', monospace;color:#e5c07b;letter-spacing:1.169px;">1.230000</div>
<div class="t" style="left:893.80px;top:1223.26px;font:normal normal 20px/20px 'Liberation Mono', monospace;color:#e5c07b;letter-spacing:1.169px;">2.130423</div>
<div class="t" style="left:1052.10px;top:1223.26px;font:normal normal 20px/20px 'Liberation Mono', monospace;color:#e5c07b;letter-spacing:1.169px;">5.000000</div>
<div class="t" style="left:594.36px;top:1253.38px;font:normal normal 20px/20px 'Liberation Mono', monospace;color:#7d8799;">5</div>
<div class="t" style="left:641.70px;top:1253.38px;font:normal normal 20px/20px 'Liberation Mono', monospace;color:#e06c75;letter-spacing:1.488px;">Ni</div>
<div class="t" style="left:735.00px;top:1253.38px;font:normal normal 20px/20px 'Liberation Mono', monospace;color:#e5c07b;letter-spacing:1.169px;">3.689999</div>
<div class="t" style="left:893.80px;top:1253.38px;font:normal normal 20px/20px 'Liberation Mono', monospace;color:#e5c07b;letter-spacing:1.169px;">3.550705</div>
<div class="t" style="left:1052.10px;top:1253.38px;font:normal normal 20px/20px 'Liberation Mono', monospace;color:#e5c07b;letter-spacing:1.169px;">7.008582</div>
<div class="t" style="left:594.36px;top:1283.50px;font:normal normal 20px/20px 'Liberation Mono', monospace;color:#7d8799;">6</div>
<div class="t" style="left:641.70px;top:1283.50px;font:normal normal 20px/20px 'Liberation Mono', monospace;color:#e06c75;letter-spacing:1.488px;">Ni</div>
<div class="t" style="left:735.00px;top:1283.50px;font:normal normal 20px/20px 'Liberation Mono', monospace;color:#e5c07b;letter-spacing:1.169px;">2.459999</div>
<div class="t" style="left:893.80px;top:1283.50px;font:normal normal 20px/20px 'Liberation Mono', monospace;color:#e5c07b;letter-spacing:1.169px;">2.840565</div>
<div class="t" style="left:1052.10px;top:1283.50px;font:normal normal 20px/20px 'Liberation Mono', monospace;color:#e5c07b;letter-spacing:1.169px;">9.017163</div>
<div class="t" style="left:594.36px;top:1313.62px;font:normal normal 20px/20px 'Liberation Mono', monospace;color:#7d8799;">7</div>
<div class="t" style="left:641.70px;top:1313.62px;font:normal normal 20px/20px 'Liberation Mono', monospace;color:#e06c75;letter-spacing:1.488px;">Ni</div>
<div class="t" style="left:735.00px;top:1313.62px;font:normal normal 20px/20px 'Liberation Mono', monospace;color:#e5c07b;letter-spacing:1.169px;">2.460000</div>
<div class="t" style="left:893.80px;top:1313.62px;font:normal normal 20px/20px 'Liberation Mono', monospace;color:#e5c07b;letter-spacing:1.169px;">4.260846</div>
<div class="t" style="left:1052.10px;top:1313.62px;font:normal normal 20px/20px 'Liberation Mono', monospace;color:#e5c07b;letter-spacing:1.169px;">5.000000</div>
<div class="t" style="left:594.36px;top:1343.74px;font:normal normal 20px/20px 'Liberation Mono', monospace;color:#7d8799;">8</div>
<div class="t" style="left:641.70px;top:1343.74px;font:normal normal 20px/20px 'Liberation Mono', monospace;color:#e06c75;letter-spacing:1.488px;">Ni</div>
<div class="t" style="left:735.00px;top:1343.74px;font:normal normal 20px/20px 'Liberation Mono', monospace;color:#e5c07b;letter-spacing:1.169px;">4.919999</div>
<div class="t" style="left:893.80px;top:1343.74px;font:normal normal 20px/20px 'Liberation Mono', monospace;color:#e5c07b;letter-spacing:1.169px;">5.681128</div>
<div class="t" style="left:1052.10px;top:1343.74px;font:normal normal 20px/20px 'Liberation Mono', monospace;color:#e5c07b;letter-spacing:1.169px;">7.008582</div>
<div class="t" style="left:594.36px;top:1373.86px;font:normal normal 20px/20px 'Liberation Mono', monospace;color:#7d8799;">9</div>
<div class="t" style="left:641.70px;top:1373.86px;font:normal normal 20px/20px 'Liberation Mono', monospace;color:#e06c75;letter-spacing:1.488px;">Ni</div>
<div class="t" style="left:735.00px;top:1373.86px;font:normal normal 20px/20px 'Liberation Mono', monospace;color:#e5c07b;letter-spacing:1.169px;">3.689999</div>
<div class="t" style="left:893.80px;top:1373.86px;font:normal normal 20px/20px 'Liberation Mono', monospace;color:#e5c07b;letter-spacing:1.169px;">4.970987</div>
<div class="t" style="left:1052.10px;top:1373.86px;font:normal normal 20px/20px 'Liberation Mono', monospace;color:#e5c07b;letter-spacing:1.169px;">9.017163</div>
<div class="t" style="left:581.11px;top:1403.98px;font:normal normal 20px/20px 'Liberation Mono', monospace;color:#7d8799;letter-spacing:1.288px;">10</div>
<div class="t" style="left:641.70px;top:1403.98px;font:normal normal 20px/20px 'Liberation Mono', monospace;color:#e06c75;letter-spacing:1.488px;">Ni</div>
<div class="t" style="left:735.00px;top:1403.98px;font:normal normal 20px/20px 'Liberation Mono', monospace;color:#e5c07b;letter-spacing:1.169px;">2.460000</div>
<div class="t" style="left:893.80px;top:1403.98px;font:normal normal 20px/20px 'Liberation Mono', monospace;color:#e5c07b;letter-spacing:1.169px;">0.000000</div>
<div class="t" style="left:1052.10px;top:1403.98px;font:normal normal 20px/20px 'Liberation Mono', monospace;color:#e5c07b;letter-spacing:1.169px;">5.000000</div>
<div class="t" style="left:581.11px;top:1434.10px;font:normal normal 20px/20px 'Liberation Mono', monospace;color:#7d8799;letter-spacing:0.288px;">11</div>
<div class="t" style="left:641.70px;top:1434.10px;font:normal normal 20px/20px 'Liberation Mono', monospace;color:#e06c75;letter-spacing:1.488px;">Ni</div>
<div class="t" style="left:735.00px;top:1434.10px;font:normal normal 20px/20px 'Liberation Mono', monospace;color:#e5c07b;letter-spacing:1.169px;">4.919999</div>
<div class="t" style="left:893.80px;top:1434.10px;font:normal normal 20px/20px 'Liberation Mono', monospace;color:#e5c07b;letter-spacing:1.169px;">1.420282</div>
<div class="t" style="left:1052.10px;top:1434.10px;font:normal normal 20px/20px 'Liberation Mono', monospace;color:#e5c07b;letter-spacing:1.169px;">7.008582</div>
<div class="t" style="left:581.11px;top:1464.22px;font:normal normal 20px/20px 'Liberation Mono', monospace;color:#7d8799;letter-spacing:1.288px;">12</div>
<div class="t" style="left:641.70px;top:1464.22px;font:normal normal 20px/20px 'Liberation Mono', monospace;color:#e06c75;letter-spacing:1.488px;">Ni</div>
<div class="t" style="left:735.00px;top:1464.22px;font:normal normal 20px/20px 'Liberation Mono', monospace;color:#e5c07b;letter-spacing:1.169px;">3.689999</div>
<div class="t" style="left:893.80px;top:1464.22px;font:normal normal 20px/20px 'Liberation Mono', monospace;color:#e5c07b;letter-spacing:1.169px;">0.710142</div>
<div class="t" style="left:1052.10px;top:1464.22px;font:normal normal 20px/20px 'Liberation Mono', monospace;color:#e5c07b;letter-spacing:1.169px;">9.017163</div>
<div class="t" style="left:581.11px;top:1494.34px;font:normal normal 20px/20px 'Liberation Mono', monospace;color:#7d8799;letter-spacing:1.288px;">13</div>
<div class="t" style="left:641.70px;top:1494.34px;font:normal normal 20px/20px 'Liberation Mono', monospace;color:#e06c75;letter-spacing:1.488px;">Ni</div>
<div class="t" style="left:735.00px;top:1494.34px;font:normal normal 20px/20px 'Liberation Mono', monospace;color:#e5c07b;letter-spacing:1.169px;">3.690000</div>
<div class="t" style="left:893.80px;top:1494.34px;font:normal normal 20px/20px 'Liberation Mono', monospace;color:#e5c07b;letter-spacing:1.169px;">2.130423</div>
<div class="t" style="left:1052.10px;top:1494.34px;font:normal normal 20px/20px 'Liberation Mono', monospace;color:#e5c07b;letter-spacing:1.169px;">5.000000</div>
<div class="t" style="left:581.11px;top:1524.46px;font:normal normal 20px/20px 'Liberation Mono', monospace;color:#7d8799;letter-spacing:1.288px;clip-path:inset(0 0 5.4px 0);">14</div>
<div class="t" style="left:641.70px;top:1524.46px;font:normal normal 20px/20px 'Liberation Mono', monospace;color:#e06c75;letter-spacing:1.488px;clip-path:inset(0 0 5.4px 0);">Ni</div>
<div class="t" style="left:735.00px;top:1524.46px;font:normal normal 20px/20px 'Liberation Mono', monospace;color:#e5c07b;letter-spacing:1.169px;clip-path:inset(0 0 5.4px 0);">6.149999</div>
<div class="t" style="left:893.80px;top:1524.46px;font:normal normal 20px/20px 'Liberation Mono', monospace;color:#e5c07b;letter-spacing:1.169px;clip-path:inset(0 0 5.4px 0);">3.550705</div>
<div class="t" style="left:1052.10px;top:1524.46px;font:normal normal 20px/20px 'Liberation Mono', monospace;color:#e5c07b;letter-spacing:1.169px;clip-path:inset(0 0 5.4px 0);">7.008582</div>
<div class="r" style="left:1510px;top:304.5px;width:87px;height:526.5px;background:#232323;border-radius:9px;box-shadow:0 3px 9px rgba(0,0,0,.55),0 1px 3px rgba(0,0,0,.4);"></div>
<svg class="ic" style="left:1533.80px;top:328.00px;width:40px;height:40px" viewBox="0 0 24 24" ><path fill="#e6732d" d="M19 6.41L17.59 5 12 10.59 6.41 5 5 6.41 10.59 12 5 17.59 6.41 19 12 13.41 17.59 19 19 17.59 13.41 12z"/></svg>
<svg class="ic" style="left:1533.80px;top:416.00px;width:40px;height:40px" viewBox="0 0 24 24" ><path fill="#fff" d="M12 4.5C7 4.5 2.73 7.61 1 12c1.73 4.39 6 7.5 11 7.5s9.27-3.11 11-7.5c-1.73-4.39-6-7.5-11-7.5zM12 17c-2.76 0-5-2.24-5-5s2.24-5 5-5 5 2.24 5 5-2.24 5-5 5zm0-8c-1.66 0-3 1.34-3 3s1.34 3 3 3 3-1.34 3-3-1.34-3-3-3z"/></svg>
<svg class="ic" style="left:1533.80px;top:504.00px;width:40px;height:40px" viewBox="0 0 24 24" ><path fill="#fff" d="M19.14 12.94c.04-.3.06-.61.06-.94 0-.32-.02-.64-.07-.94l2.03-1.58c.18-.14.23-.41.12-.61l-1.92-3.32c-.12-.22-.37-.29-.59-.22l-2.39.96c-.5-.38-1.03-.7-1.62-.94l-.36-2.54c-.04-.24-.24-.41-.48-.41h-3.84c-.24 0-.43.17-.47.41l-.36 2.54c-.59.24-1.13.57-1.62.94l-2.39-.96c-.22-.08-.47 0-.59.22L2.74 8.87c-.12.21-.08.47.12.61l2.03 1.58c-.05.3-.09.63-.09.94s.02.64.07.94l-2.03 1.58c-.18.14-.23.41-.12.61l1.92 3.32c.12.22.37.29.59.22l2.39-.96c.5.38 1.03.7 1.62.94l.36 2.54c.05.24.24.41.48.41h3.84c.24 0 .44-.17.47-.41l.36-2.54c.59-.24 1.13-.56 1.62-.94l2.39.96c.22.08.47 0 .59-.22l1.92-3.32c.12-.22.07-.47-.12-.61l-2.01-1.58zM12 15.6c-1.98 0-3.6-1.62-3.6-3.6s1.62-3.6 3.6-3.6 3.6 1.62 3.6 3.6-1.62 3.6-3.6 3.6z"/></svg>
<svg class="ic" style="left:1533.80px;top:592.00px;width:40px;height:40px" viewBox="0 0 24 24" ><path fill="#fff" d="M17.66 17.66l-1.06 1.06-.71-.71 1.06-1.06-1.94-1.94-1.06 1.06-.71-.71 1.06-1.06-1.94-1.94-1.06 1.06-.71-.71 1.06-1.06L9.7 9.7l-1.06 1.06-.71-.71 1.06-1.06-1.94-1.94-1.06 1.06-.71-.71 1.06-1.06L4 4v14c0 1.1.9 2 2 2h14l-2.34-2.34zM7 17v-5.76L12.76 17H7z"/></svg>
<svg class="ic" style="left:1533.80px;top:680.00px;width:40px;height:40px" viewBox="0 0 24 24" ><path fill="#fff" d="M9 3L5 6.99h3V14h2V6.99h3L9 3zm7 14.01V10h-2v7.01h-3L15 21l4-3.99h-3z"/></svg>
<svg class="ic" style="left:1533.80px;top:768.00px;width:40px;height:40px" viewBox="0 0 24 24" ><path fill="#fff" d="M3 17.25V21h3.75L17.81 9.94l-3.75-3.75L3 17.25zM20.71 7.04c.39-.39.39-1.02 0-1.41l-2.34-2.34c-.39-.39-1.02-.39-1.41 0l-1.83 1.83 3.75 3.75 1.83-1.83z"/></svg>
<svg class="ic" style="left:0;top:0;width:3072px;height:1700px;pointer-events:none" viewBox="0 0 3072 1700"><defs><radialGradient id="gC" cx="50%" cy="50%" r="50%" fx="52.5%" fy="44%"><stop offset="0" stop-color="#c1c1c1"/><stop offset="0.2" stop-color="#bebebe"/><stop offset="0.3" stop-color="#b9b9b9"/><stop offset="0.4" stop-color="#b3b3b3"/><stop offset="0.5" stop-color="#ababab"/><stop offset="0.6" stop-color="#a0a0a0"/><stop offset="0.7" stop-color="#929292"/><stop offset="0.8" stop-color="#7f7f7f"/><stop offset="0.85" stop-color="#737373"/><stop offset="0.9" stop-color="#646464"/><stop offset="0.95" stop-color="#505050"/><stop offset="0.98" stop-color="#3e3e3e"/><stop offset="1.0" stop-color="#1d1d1d"/></radialGradient><radialGradient id="gN" cx="50%" cy="50%" r="50%" fx="51%" fy="46%"><stop offset="0" stop-color="#96fa7c"/><stop offset="0.2" stop-color="#93f67a"/><stop offset="0.3" stop-color="#90f077"/><stop offset="0.4" stop-color="#8be773"/><stop offset="0.5" stop-color="#84dc6d"/><stop offset="0.6" stop-color="#7bce66"/><stop offset="0.7" stop-color="#70ba5c"/><stop offset="0.8" stop-color="#61a150"/><stop offset="0.85" stop-color="#579148"/><stop offset="0.9" stop-color="#4b7c3e"/><stop offset="0.95" stop-color="#3a6130"/><stop offset="0.98" stop-color="#2b4824"/><stop offset="1.0" stop-color="#1a1c1a"/></radialGradient></defs><g stroke="#f2f2f2" stroke-width="1.75" stroke-linecap="round" fill="none" opacity=".95" style="filter:blur(0.8px)"><line x1="2106" y1="451" x2="2139" y2="1063"/><line x1="2139" y1="1063" x2="2545" y2="974"/><line x1="2013" y1="1414.5" x2="2139" y2="1063"/><line x1="1949" y1="819" x2="2013" y2="1414.5"/></g><g style="filter:blur(0.8px)"><circle cx="2453" cy="698" r="20.4" fill="url(#gN)"/><circle cx="2299" cy="728" r="20.5" fill="url(#gN)"/><circle cx="2509" cy="740" r="20.6" fill="url(#gN)"/><circle cx="2141" cy="760" r="20.6" fill="url(#gN)"/><circle cx="2361" cy="770" r="20.7" fill="url(#gN)"/><circle cx="2211" cy="802" r="20.8" fill="url(#gN)"/><circle cx="2418" cy="811" r="20.8" fill="url(#gN)"/><circle cx="2259" cy="844" r="21.0" fill="url(#gN)"/><circle cx="2477" cy="851" r="21.0" fill="url(#gN)"/><circle cx="2096" cy="879" r="21.1" fill="url(#gN)"/><circle cx="2324" cy="884" r="21.1" fill="url(#gN)"/><circle cx="2169" cy="917" r="21.3" fill="url(#gN)"/><circle cx="2385" cy="917" r="21.3" fill="url(#gN)"/><circle cx="2380" cy="933" r="21.3" fill="url(#gN)"/><circle cx="2238" cy="951" r="21.4" fill="url(#gN)"/><circle cx="2216" cy="968" r="21.5" fill="url(#gN)"/><circle cx="2442" cy="968" r="21.5" fill="url(#gN)"/><circle cx="2086" cy="983" r="21.5" fill="url(#gN)"/><circle cx="2285" cy="1003" r="21.6" fill="url(#gN)"/><circle cx="2048" cy="1005" r="21.6" fill="url(#gN)"/><circle cx="2349" cy="1035" r="21.7" fill="url(#gN)"/><circle cx="2125" cy="1038" r="21.8" fill="url(#gN)"/><circle cx="2196" cy="1069" r="21.9" fill="url(#gN)"/><circle cx="2041" cy="1103" r="22.0" fill="url(#gN)"/><circle cx="2310.5" cy="1157.5" r="22.2" fill="url(#gN)"/><circle cx="2153" cy="1191" r="22.4" fill="url(#gN)"/><circle cx="1992" cy="1230" r="22.5" fill="url(#gN)"/><g stroke="#8f8f8f" stroke-width="14.5" stroke-linecap="butt"><line x1="2230.6" y1="633" x2="2326" y2="651"/><line x1="2160.2" y1="683" x2="2230.6" y2="633"/><line x1="2205" y1="568" x2="2230.6" y2="633"/><line x1="2326" y1="651" x2="2393.6" y2="601.7"/><line x1="2326" y1="651" x2="2355" y2="719"/><line x1="2065.5" y1="667" x2="2160.2" y2="683"/><line x1="2160.2" y1="683" x2="2186" y2="754"/><line x1="2393.6" y1="601.7" x2="2366.6" y2="537"/><line x1="2393.6" y1="601.7" x2="2490" y2="617.5"/><line x1="2355" y1="719" x2="2453" y2="736.7"/><line x1="2355" y1="719" x2="2284" y2="773"/><line x1="2186" y1="754" x2="2284" y2="773"/><line x1="2186" y1="754" x2="2112" y2="810"/><line x1="2284" y1="773" x2="2313" y2="845"/><line x1="2013" y1="789" x2="2112" y2="810"/><line x1="2112" y1="810" x2="2138" y2="882"/><line x1="2525" y1="506.5" x2="2479.6" y2="498.5"/><line x1="2525" y1="506.5" x2="2558.1" y2="482.8"/><line x1="2525" y1="506.5" x2="2537.8" y2="540.1"/><line x1="2366.6" y1="537" x2="2320.6" y2="528.9"/><line x1="2366.6" y1="537" x2="2400.1" y2="513.0"/><line x1="2205" y1="568" x2="2158.5" y2="559.8"/><line x1="2205" y1="568" x2="2238.9" y2="543.8"/><line x1="2490" y1="617.5" x2="2524.6" y2="592.8"/><line x1="2490" y1="617.5" x2="2503.3" y2="652.6"/><line x1="2065.5" y1="667" x2="2030.3" y2="692.2"/><line x1="2065.5" y1="667" x2="2051.9" y2="631.3"/><line x1="2453" y1="736.7" x2="2489.1" y2="710.9"/><line x1="2453" y1="736.7" x2="2469.7" y2="780.7"/><line x1="2013" y1="789" x2="1976.2" y2="815.3"/><line x1="2013" y1="789" x2="1998.8" y2="751.7"/><line x1="2313" y1="845" x2="2364.5" y2="854.1"/><line x1="2313" y1="845" x2="2275.5" y2="871.8"/><line x1="2138" y1="882" x2="2190.1" y2="891.2"/><line x1="2138" y1="882" x2="2100.0" y2="909.1"/><line x1="1960" y1="920" x2="2012.8" y2="929.4"/><line x1="1960" y1="920" x2="1921.5" y2="947.5"/><line x1="1960" y1="920" x2="1945.2" y2="881.0"/></g><circle cx="2525" cy="506.5" r="21.1" fill="url(#gC)"/><circle cx="2366.6" cy="537" r="21.3" fill="url(#gC)"/><circle cx="2205" cy="568" r="21.5" fill="url(#gC)"/><circle cx="2393.6" cy="601.7" r="21.7" fill="url(#gC)"/><circle cx="2490" cy="617.5" r="21.8" fill="url(#gC)"/><circle cx="2230.6" cy="633" r="21.9" fill="url(#gC)"/><circle cx="2326" cy="651" r="22.0" fill="url(#gC)"/><circle cx="2065.5" cy="667" r="22.1" fill="url(#gC)"/><circle cx="2160.2" cy="683" r="22.2" fill="url(#gC)"/><circle cx="2355" cy="719" r="22.4" fill="url(#gC)"/><circle cx="2453" cy="736.7" r="22.5" fill="url(#gC)"/><circle cx="2186" cy="754" r="22.6" fill="url(#gC)"/><circle cx="2284" cy="773" r="22.7" fill="url(#gC)"/><circle cx="2013" cy="789" r="22.8" fill="url(#gC)"/><circle cx="2112" cy="810" r="23.0" fill="url(#gC)"/><circle cx="2313" cy="845" r="23.2" fill="url(#gC)"/><circle cx="2138" cy="882" r="23.4" fill="url(#gC)"/><circle cx="1960" cy="920" r="23.6" fill="url(#gC)"/></g><g stroke="#f2f2f2" stroke-width="1.75" stroke-linecap="round" fill="none" opacity=".95" style="filter:blur(0.8px)"><line x1="1949" y1="819" x2="2490" y2="710"/><line x1="2490" y1="710" x2="2455" y2="1310"/><line x1="2490" y1="710" x2="2594.5" y2="359"/><line x1="2106" y1="451" x2="2594.5" y2="359"/><line x1="1949" y1="819" x2="2106" y2="451"/><line x1="2013" y1="1414.5" x2="2455" y2="1310"/><line x1="2455" y1="1310" x2="2545" y2="974"/><line x1="2594.5" y1="359" x2="2545" y2="974"/></g><g style="filter:blur(0.8px)"><line x1="2903.3" y1="379.5" x2="2894.8" y2="356.4" stroke="#6ef546" stroke-width="2"/><polygon points="2889,337.8 2882,349.5 2886.3,356 2895.6,356.9 2900.4,351.7 2897,343" fill="#6ef546"/><line x1="2905.3" y1="379.8" x2="2905.3" y2="350" stroke="#001ef0" stroke-width="2.4"/><polygon points="2905.2,317.8 2918.4,342.1 2912.5,348 2905.6,352.2 2892.4,347.6 2892.4,339.4" fill="#001ef0"/><line x1="2906" y1="379.3" x2="2943" y2="371.9" stroke="#eb3223" stroke-width="2"/><polygon points="2944.2,359.8 2968.3,366.9 2949.6,380.5 2942.4,372" fill="#eb3223"/></g></svg>
<div class="r" style="left:2932px;top:1420px;width:80px;height:80px;background:#2558b4;border-radius:50%;box-shadow:0 4px 14px rgba(0,0,0,.45);"></div>
<svg class="ic" style="left:2932px;top:1420px;width:80px;height:80px;filter:drop-shadow(-1.5px 2.5px 2.5px rgba(0,0,30,.35))" viewBox="2932 1420 80 80"><g fill="#fff"><circle cx="2973.5" cy="1442.3" r="6.7"/><path d="M2961.4,1452.4 L2977.5,1452 Q2979.3,1452 2978.9,1453.8 L2975.2,1472.6 Q2974.6,1476.6 2977.2,1476.9 Q2979.5,1477 2982.6,1478.3 Q2981,1482 2977.5,1483 Q2973,1484.4 2970,1483.8 Q2963,1482.5 2963.5,1476 L2966.8,1456.8 Q2965,1454.8 2961.4,1452.4 Z"/></g></svg>
</div></body></html>
